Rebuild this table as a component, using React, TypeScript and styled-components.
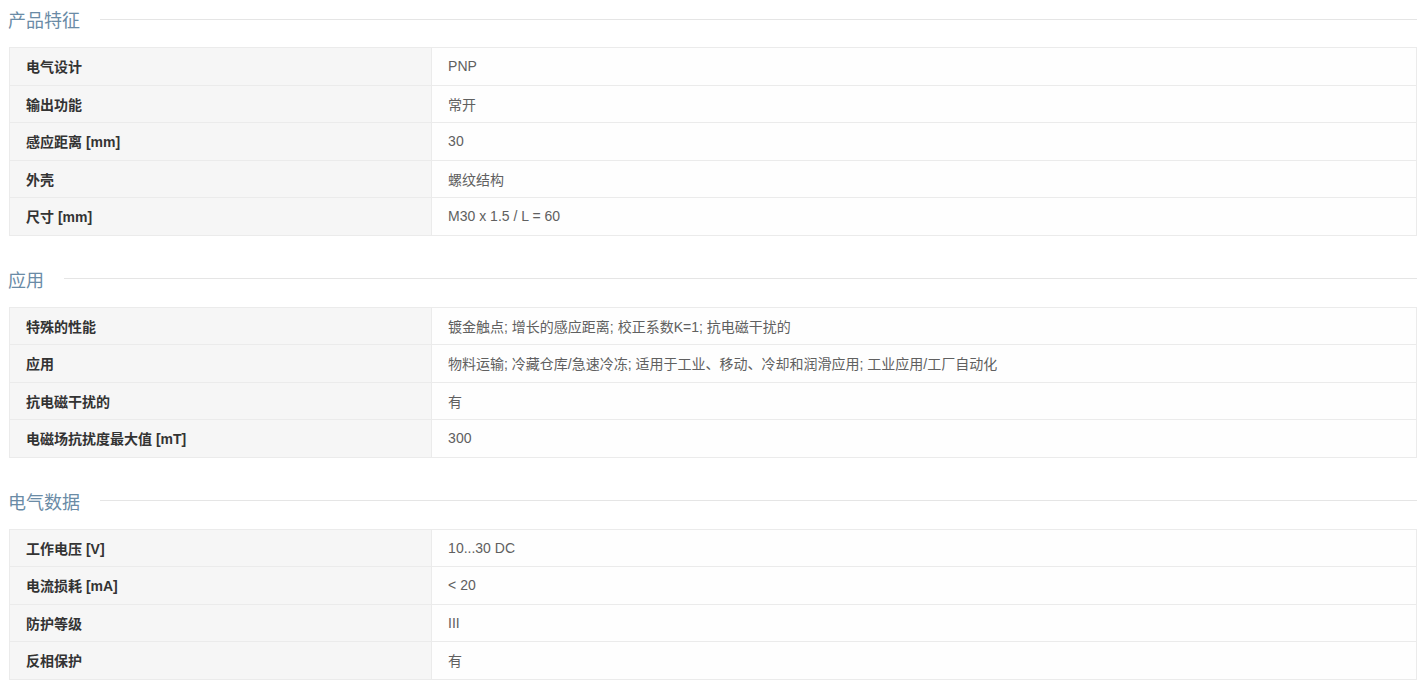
import React from 'react';
import styled, { createGlobalStyle } from 'styled-components';

type Row = [string, string];
type Section = { title: string; rows: Row[] };

const sections: Section[] = [
  {
    title: '产品特征',
    rows: [
      ['电气设计', 'PNP'],
      ['输出功能', '常开'],
      ['感应距离 [mm]', '30'],
      ['外壳', '螺纹结构'],
      ['尺寸 [mm]', 'M30 x 1.5 / L = 60'],
    ],
  },
  {
    title: '应用',
    rows: [
      ['特殊的性能', '镀金触点; 增长的感应距离; 校正系数K=1; 抗电磁干扰的'],
      ['应用', '物料运输; 冷藏仓库/急速冷冻; 适用于工业、移动、冷却和润滑应用; 工业应用/工厂自动化'],
      ['抗电磁干扰的', '有'],
      ['电磁场抗扰度最大值 [mT]', '300'],
    ],
  },
  {
    title: '电气数据',
    rows: [
      ['工作电压 [V]', '10...30 DC'],
      ['电流损耗 [mA]', '< 20'],
      ['防护等级', 'III'],
      ['反相保护', '有'],
    ],
  },
];

const GlobalStyle = createGlobalStyle`
  html, body {
    margin: 0;
    padding: 0;
    background: #fff;
  }
  body {
    font-family: 'Liberation Sans', Arial, 'Noto Sans CJK SC', sans-serif;
  }
`;

const Page = styled.div`
  padding: 0 9px 0 8px;
  display: flex;
  flex-direction: column;
  gap: 24px;
`;

const Block = styled.section`
  display: flex;
  flex-direction: column;
  gap: 9px;
`;

const Heading = styled.div`
  height: 38px;
  display: flex;
  align-items: center;
  gap: 20px;
  h3 {
    margin: 0;
    font-size: 18px;
    font-weight: normal;
    color: #6a8ba6;
    white-space: nowrap;
    font-family: 'Noto Sans CJK SC', sans-serif;
  }
  &::after {
    content: '';
    flex: 1;
    height: 1px;
    background: #e5e5e5;
  }
`;

const Table = styled.table`
  width: calc(100% - 1px);
  margin-left: 1px;
  border-collapse: collapse;
  table-layout: fixed;
  font-size: 14px;
  tr {
    height: 37.5px;
  }
`;

const LabelCol = styled.col`
  width: 30%;
`;

const Label = styled.td`
  background: #f6f6f6;
  border: 1px solid #ebebeb;
  padding: 0 16px;
  font-weight: bold;
  color: #333;
`;

const Value = styled.td`
  background: #fefefe;
  border: 1px solid #ebebeb;
  padding: 0 16px;
  color: #606060;
`;

export default function App() {
  return (
    <>
      <GlobalStyle />
      <Page>
        {sections.map((s) => (
          <Block key={s.title}>
            <Heading>
              <h3>{s.title}</h3>
            </Heading>
            <Table>
              <colgroup>
                <LabelCol />
                <col />
              </colgroup>
              <tbody>
                {s.rows.map(([k, v]) => (
                  <tr key={k}>
                    <Label>{k}</Label>
                    <Value>{v}</Value>
                  </tr>
                ))}
              </tbody>
            </Table>
          </Block>
        ))}
      </Page>
    </>
  );
}
